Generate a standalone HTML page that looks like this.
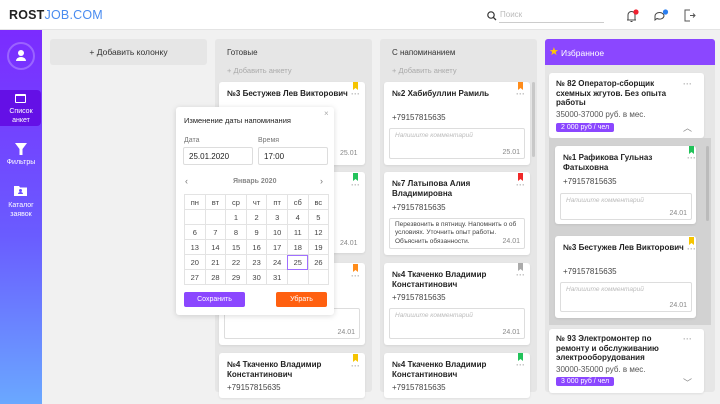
<!DOCTYPE html>
<html><head><meta charset="utf-8"><style>
*{box-sizing:border-box;margin:0;padding:0}
body{width:720px;height:404px;overflow:hidden;background:#f1f1f1;font-family:"Liberation Sans",sans-serif;color:#222;position:relative}
.a{position:absolute}
.hdr{left:0;top:0;width:720px;height:30px;background:#fff;border-bottom:1px solid #e4e4e4}
.side{left:0;top:30px;width:42px;height:374px;background:linear-gradient(#7b2bff,#6a5cff 55%,#6aa8ff)}
.col{background:#e6e6e6;border-radius:3px}
.card{background:#fff;border-radius:3px;box-shadow:0 1px 2px rgba(0,0,0,.08)}
.nm{font-size:8px;font-weight:bold;line-height:10px;color:#222}
.ph{font-size:8px;color:#444}
.cm{border:1px solid #ddd;border-radius:2px;font-size:6.5px;color:#bbb;font-style:italic;padding:3px 5px}
.dt{position:absolute;right:4px;bottom:2px;font-size:7px;color:#888;font-style:normal}
.dots{font-size:9px;color:#bbb;line-height:6px;font-weight:bold}
.bm{width:5px;height:8px;clip-path:polygon(0 0,100% 0,100% 100%,50% 75%,0 100%)}
.ct{font-size:8px;color:#333}
.add{font-size:7.5px;color:#aaa}
.cal td{border:1px solid #e3e3e3;width:20.6px;height:15px;text-align:center;font-size:7.5px;color:#444}
.cal{border-collapse:collapse}
.tag{background:#8b47ff;color:#fff;font-size:7px;border-radius:2px;padding:1px 5px}
.sl{color:#fff;font-size:7px;text-align:center;width:42px;line-height:9px}
</style></head><body>
<div class="a hdr"></div>
<div class="a" style="left:9px;top:8px;font-size:12.5px;font-weight:bold;letter-spacing:.2px">ROST<span style="color:#4a8cf0;font-weight:normal">JOB.COM</span></div>
<svg class="a" style="left:487px;top:11px" width="10" height="10"><circle cx="4" cy="4" r="3.2" fill="none" stroke="#333" stroke-width="1.2"/><line x1="6.4" y1="6.4" x2="9" y2="9" stroke="#333" stroke-width="1.3"/></svg>
<div class="a" style="left:500px;top:10px;font-size:8px;color:#bbb">Поиск</div>
<div class="a" style="left:499px;top:22px;width:105px;height:1px;background:#ccc"></div>
<svg class="a" style="left:625px;top:9px" width="14" height="14"><path d="M2 11h9M3 11V6a3.5 3.5 0 017 0v5M5.5 12.5h2" fill="none" stroke="#444" stroke-width="1"/><circle cx="11" cy="3" r="2.6" fill="#f02030"/></svg>
<svg class="a" style="left:653px;top:9px" width="16" height="14"><path d="M2 7a4.5 3.5 0 119 0 4.5 3.5 0 01-7 2.5L2 11z" fill="none" stroke="#444" stroke-width="1"/><circle cx="12.5" cy="3" r="2.6" fill="#2a7ef0"/></svg>
<svg class="a" style="left:683px;top:9px" width="13" height="13"><path d="M7 1H2v11h5M7 6.5h5M10 4.5l2 2-2 2" fill="none" stroke="#555" stroke-width="1"/></svg>

<div class="a side"></div>
<div class="a" style="left:7px;top:42px;width:28px;height:28px;border-radius:50%;border:2.5px solid rgba(255,255,255,.25)"></div>
<svg class="a" style="left:15px;top:49px" width="12" height="13"><circle cx="6" cy="4" r="3" fill="#fff"/><path d="M1 12a5 4 0 0110 0z" fill="#fff"/></svg>
<div class="a" style="left:0;top:90px;width:41px;height:36px;background:#6410e6;border-radius:0 4px 4px 0"></div>
<div class="a" style="left:15px;top:94px;width:11px;height:9px;border:1px solid #fff;border-top-width:2.5px;border-radius:1px"></div>
<div class="a sl" style="top:107px">Список<br>анкет</div>
<svg class="a" style="left:15px;top:143px" width="12" height="12"><path d="M0 0h12L7.5 6v6h-3V6z" fill="#fff"/></svg>
<div class="a sl" style="top:158px">Фильтры</div>
<svg class="a" style="left:14px;top:185px" width="13" height="11"><path d="M0 1h5l1 1.5h7V11H0z" fill="#fff"/><circle cx="6.5" cy="5.5" r="1.5" fill="#6a4cff"/><path d="M4 9a2.5 2 0 015 0z" fill="#6a4cff"/></svg>
<div class="a sl" style="top:201px">Каталог<br>заявок</div>

<div class="a col" style="left:50px;top:39px;width:157px;height:26px;font-size:8.5px;text-align:center;line-height:26px;color:#333">+ Добавить колонку</div>

<!-- column 1 -->
<div class="a col" style="left:215px;top:39px;width:157px;height:353px"></div>
<div class="a ct" style="left:227px;top:48px">Готовые</div>
<div class="a add" style="left:227px;top:66px">+ Добавить анкету</div>
<div class="a card" style="left:219px;top:82px;width:146px;height:83px"></div>
<div class="a nm" style="left:227px;top:89px">№3 Бестужев Лев Викторович</div>
<div class="a bm" style="left:353px;top:82px;background:#f5c400"></div><div class="a dots" style="left:351px;top:91px">···</div>
<div class="a card" style="left:219px;top:172px;width:146px;height:81px"></div>
<div class="a bm" style="left:353px;top:173px;background:#22c25a"></div><div class="a dots" style="left:351px;top:182px">···</div>
<div class="a" style="left:340px;top:240px;font-size:7px;color:#888">24.01</div>
<div class="a" style="left:340px;top:150px;font-size:7px;color:#888">25.01</div>
<div class="a card" style="left:219px;top:263px;width:146px;height:82px"></div>
<div class="a bm" style="left:353px;top:264px;background:#ff8c1a"></div><div class="a dots" style="left:351px;top:273px">···</div>
<div class="a cm" style="left:224px;top:308px;width:136px;height:31px"><span class="dt">24.01</span></div>
<div class="a card" style="left:219px;top:353px;width:146px;height:45px"></div>
<div class="a bm" style="left:353px;top:354px;background:#f5c400"></div><div class="a dots" style="left:351px;top:363px">···</div>
<div class="a nm" style="left:227px;top:360px">№4 Ткаченко Владимир<br>Константинович</div>
<div class="a ph" style="left:227px;top:383px">+79157815635</div>

<!-- column 2 -->
<div class="a col" style="left:380px;top:39px;width:157px;height:353px"></div>
<div class="a ct" style="left:392px;top:48px">С напоминанием</div>
<div class="a add" style="left:392px;top:66px">+ Добавить анкету</div>
<div class="a card" style="left:384px;top:82px;width:146px;height:83px"></div>
<div class="a nm" style="left:392px;top:89px">№2 Хабибуллин Рамиль</div>
<div class="a bm" style="left:518px;top:82px;background:#ff8c1a"></div><div class="a dots" style="left:516px;top:91px">···</div>
<div class="a ph" style="left:392px;top:113px">+79157815635</div>
<div class="a cm" style="left:389px;top:128px;width:136px;height:31px">Напишите комментарий<span class="dt">25.01</span></div>
<div class="a card" style="left:384px;top:172px;width:146px;height:83px"></div>
<div class="a nm" style="left:392px;top:179px">№7 Латыпова Алия<br>Владимировна</div>
<div class="a bm" style="left:518px;top:173px;background:#f02828"></div><div class="a dots" style="left:516px;top:182px">···</div>
<div class="a ph" style="left:392px;top:203px">+79157815635</div>
<div class="a cm" style="left:389px;top:218px;width:136px;height:31px;font-style:normal;color:#444;line-height:8.3px;padding-top:2px">Перезвонить в пятницу. Напомнить о об условиях. Уточнить опыт работы. Объяснить обязанности.<span class="dt">24.01</span></div>
<div class="a card" style="left:384px;top:263px;width:146px;height:82px"></div>
<div class="a nm" style="left:392px;top:270px">№4 Ткаченко Владимир<br>Константинович</div>
<div class="a bm" style="left:518px;top:263px;background:#aaa"></div><div class="a dots" style="left:516px;top:272px">···</div>
<div class="a ph" style="left:392px;top:293px">+79157815635</div>
<div class="a cm" style="left:389px;top:308px;width:136px;height:31px">Напишите комментарий<span class="dt">24.01</span></div>
<div class="a card" style="left:384px;top:353px;width:146px;height:45px"></div>
<div class="a nm" style="left:392px;top:360px">№4 Ткаченко Владимир<br>Константинович</div>
<div class="a bm" style="left:518px;top:353px;background:#22c25a"></div><div class="a dots" style="left:516px;top:362px">···</div>
<div class="a ph" style="left:392px;top:383px">+79157815635</div>
<div class="a" style="left:532px;top:82px;width:3px;height:75px;background:#c8c8c8;border-radius:2px"></div>

<!-- column 3 -->
<div class="a col" style="left:545px;top:39px;width:170px;height:353px"></div>
<div class="a" style="left:545px;top:39px;width:170px;height:26px;background:#8b47ff;border-radius:3px 3px 0 0"></div>
<div class="a" style="left:549px;top:45px;color:#ffc800;font-size:11px">★</div>
<div class="a" style="left:561px;top:48px;color:#fff;font-size:8.5px">Избранное</div>
<div class="a card" style="left:549px;top:73px;width:155px;height:65px"></div>
<div class="a nm" style="left:556px;top:79px;line-height:9.7px">№ 82 Оператор-сборщик<br>схемных жгутов. Без опыта<br>работы</div>
<div class="a dots" style="left:683px;top:81px">···</div>
<div class="a ph" style="left:556px;top:110px;color:#555">35000-37000 руб. в мес.</div>
<div class="a tag" style="left:556px;top:123px">2 000 руб / чел</div>
<div class="a" style="left:683px;top:121px;font-size:9px;color:#888">︿</div>
<div class="a" style="left:549px;top:138px;width:162px;height:187px;background:#d2d2d2"></div>
<div class="a card" style="left:555px;top:146px;width:141px;height:78px"></div>
<div class="a nm" style="left:563px;top:153px">№1 Рафикова Гульназ<br>Фатыховна</div>
<div class="a bm" style="left:689px;top:146px;background:#22c25a"></div><div class="a dots" style="left:687px;top:155px">···</div>
<div class="a ph" style="left:563px;top:177px">+79157815635</div>
<div class="a cm" style="left:560px;top:193px;width:132px;height:27px">Напишите комментарий<span class="dt">24.01</span></div>
<div class="a card" style="left:555px;top:236px;width:141px;height:82px"></div>
<div class="a nm" style="left:563px;top:243px">№3 Бестужев Лев Викторович</div>
<div class="a bm" style="left:689px;top:237px;background:#f5c400"></div><div class="a dots" style="left:687px;top:246px">···</div>
<div class="a ph" style="left:563px;top:267px">+79157815635</div>
<div class="a cm" style="left:560px;top:282px;width:132px;height:30px">Напишите комментарий<span class="dt">24.01</span></div>
<div class="a" style="left:706px;top:146px;width:3px;height:75px;background:#bbb;border-radius:2px"></div>
<div class="a card" style="left:549px;top:329px;width:155px;height:64px"></div>
<div class="a nm" style="left:556px;top:334px;line-height:9.7px">№ 93 Электромонтер по<br>ремонту и обслуживанию<br>электрооборудования</div>
<div class="a dots" style="left:683px;top:336px">···</div>
<div class="a ph" style="left:556px;top:365px;color:#555">30000-35000 руб. в мес.</div>
<div class="a tag" style="left:556px;top:377px">3 000 руб / чел</div>
<div class="a" style="left:683px;top:376px;font-size:9px;color:#888">﹀</div>

<!-- popup -->
<div class="a" style="left:176px;top:107px;width:158px;height:208px;background:#fff;border-radius:3px;box-shadow:0 1px 6px rgba(0,0,0,.15)"></div>
<div class="a" style="left:324px;top:109px;font-size:8px;color:#aaa">×</div>
<div class="a" style="left:184px;top:116px;font-size:7.5px;color:#222">Изменение даты напоминания</div>
<div class="a" style="left:184px;top:137px;font-size:7px;color:#777">Дата</div>
<div class="a" style="left:258px;top:137px;font-size:7px;color:#777">Время</div>
<div class="a" style="left:183px;top:147px;width:70px;height:18px;border:1px solid #ddd;border-radius:2px;font-size:8px;padding:4px 5px">25.01.2020</div>
<div class="a" style="left:258px;top:147px;width:70px;height:18px;border:1px solid #ddd;border-radius:2px;font-size:8px;padding:4px 5px">17:00</div>
<div class="a" style="left:185px;top:176px;font-size:9px;color:#777">‹</div>
<div class="a" style="left:233px;top:178px;font-size:7px;color:#888;font-weight:bold">Январь 2020</div>
<div class="a" style="left:320px;top:176px;font-size:9px;color:#777">›</div>
<table class="a cal" style="left:184px;top:194px">
<tr><td>пн</td><td>вт</td><td>ср</td><td>чт</td><td>пт</td><td>сб</td><td>вс</td></tr>
<tr><td></td><td></td><td>1</td><td>2</td><td>3</td><td>4</td><td>5</td></tr>
<tr><td>6</td><td>7</td><td>8</td><td>9</td><td>10</td><td>11</td><td>12</td></tr>
<tr><td>13</td><td>14</td><td>15</td><td>16</td><td>17</td><td>18</td><td>19</td></tr>
<tr><td>20</td><td>21</td><td>22</td><td>23</td><td>24</td><td style="outline:1.5px solid #a070ff;outline-offset:-1.5px">25</td><td>26</td></tr>
<tr><td>27</td><td>28</td><td>29</td><td>30</td><td>31</td><td></td><td></td></tr>
</table>
<div class="a" style="left:184px;top:292px;width:61px;height:15px;background:#8b47ff;border-radius:2px;color:#fff;font-size:7px;text-align:center;line-height:15px">Сохранить</div>
<div class="a" style="left:276px;top:292px;width:51px;height:15px;background:#ff6010;border-radius:2px;color:#fff;font-size:7px;text-align:center;line-height:15px">Убрать</div>
</body></html>
